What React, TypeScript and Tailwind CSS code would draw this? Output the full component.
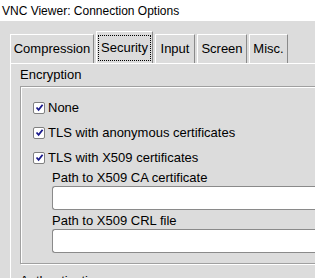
function Check({ label }: { label: string }) {
  return (
    <div className="flex items-center h-[25px]">
      <span className="w-[12px] h-[12px] bg-white border border-[#808080] rounded-[2px] flex items-center justify-center">
        <svg width="9" height="9" viewBox="0 0 9 9">
          <path d="M1.5 4.5 L3.6 6.8 L7.6 1.8" stroke="#1a1a8c" strokeWidth="1.8" fill="none" />
        </svg>
      </span>
      <span className="ml-[3px]">{label}</span>
    </div>
  );
}

function Tab({ label, w, active }: { label: string; w: string; active?: boolean }) {
  return (
    <div
      className={`${w} ${active ? "h-[32px]" : "h-[29px]"} border-l border-t border-white border-r border-r-[#8a8a8a] flex items-center justify-center`}
    >
      {active ? (
        <span className="border border-dotted border-black px-[4px] h-[26px] flex items-center w-[53px] justify-center">
          {label}
        </span>
      ) : (
        <span>{label}</span>
      )}
    </div>
  );
}

export default function App() {
  return (
    <div className="w-[315px] h-[278px] overflow-hidden bg-[#dcdcdc] text-black text-[13px] font-['Liberation_Sans',Arial,sans-serif]">
      <div className="h-[21px] bg-white flex items-center pl-[2px] text-[12px]">
        VNC Viewer: Connection Options
      </div>
      {/* Tabs */}
      <div className="h-[42px] flex items-end pl-[10px] gap-[2px]">
        <Tab label="Compression" w="w-[84px]" />
        <Tab label="Security" w="w-[57px]" active />
        <Tab label="Input" w="w-[40px]" />
        <Tab label="Screen" w="w-[50px]" />
        <Tab label="Misc." w="w-[39px]" />
      </div>
      {/* Panel */}
      <div className="ml-[10px] border-l border-t border-white h-[300px] pl-[9px]">
        <div className="h-[22px] flex items-center">Encryption</div>
        <div className="border border-[#a0a0a0] shadow-[inset_1px_1px_0_#ffffff,1px_1px_0_#ffffff] mr-[-10px] h-[178px] pl-[12px] pt-[8px]">
          <Check label="None" />
          <Check label="TLS with anonymous certificates" />
          <Check label="TLS with X509 certificates" />
          <div className="pl-[19px]">
            <div className="h-[16px] flex items-end leading-[16px]">Path to X509 CA certificate</div>
            <div className="h-[24px] bg-white border border-[#8a8a8a] border-r-0 rounded-l-[3px]" />
            <div className="h-[19px] flex items-end leading-[16px]">Path to X509 CRL file</div>
            <div className="h-[24px] bg-white border border-[#8a8a8a] border-r-0 rounded-l-[3px]" />
          </div>
        </div>
        <div className="h-[22px] flex items-center mt-[6px]">Authentication</div>
      </div>
    </div>
  );
}
